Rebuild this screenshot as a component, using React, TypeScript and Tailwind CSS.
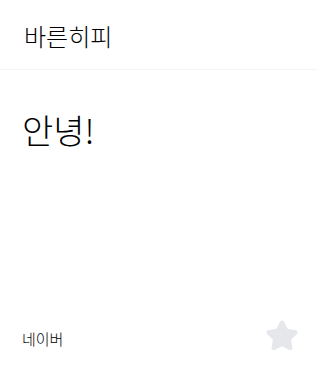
import { Star } from 'lucide-react'

const korean = { fontFamily: '"Noto Sans CJK KR", "Noto Sans", sans-serif' }

export default function App() {
  return (
    <div className="flex h-[367px] w-[317px] flex-col bg-white text-black" style={korean}>
      <header className="flex h-[70px] items-center border-b border-gray-100 px-6">
        <h1 className="mt-[2px] text-[24px] font-light leading-none">바른히피</h1>
      </header>
      <main className="flex-1 px-[22px] pt-[43px]">
        <p className="text-[34px] font-light leading-none">안녕!</p>
      </main>
      <footer className="flex items-center justify-between pb-[14px] pl-[22px] pr-[18px]">
        <span className="mt-[6px] text-[15px] font-light">네이버</span>
        <Star className="h-[34px] w-[34px] fill-gray-200 text-gray-200" />
      </footer>
    </div>
  )
}
